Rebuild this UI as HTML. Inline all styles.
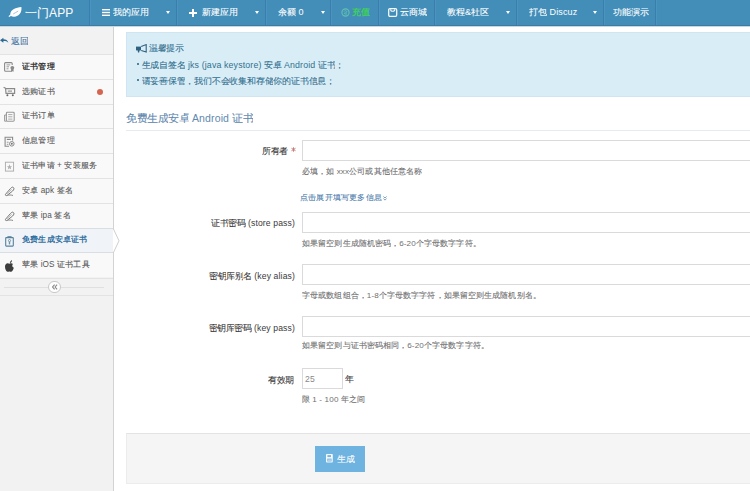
<!DOCTYPE html>
<html><head><meta charset="utf-8">
<style>
*{box-sizing:border-box;margin:0;padding:0}
html,body{width:750px;height:491px;overflow:hidden;background:#fff}
body{position:relative;font-family:"Liberation Sans",sans-serif;color:#393939}
i{font-style:normal;display:inline-block;width:1em;text-align:center;overflow:hidden;vertical-align:top;-webkit-text-stroke:0.1px currentColor}
.b i{-webkit-text-stroke:0}
.L{letter-spacing:0.14px}
.a{position:absolute;white-space:nowrap;line-height:1}
#nav{position:absolute;left:0;top:0;width:750px;height:26px;background:#438eb9}
.dv{position:absolute;top:0;width:1px;height:25px;background:#3b7dab;box-shadow:1px 0 0 #4b93c0}
.nt{position:absolute;top:8px;font-size:9px;line-height:9px;color:#fff;white-space:nowrap}
.car{position:absolute;top:11px;width:0;height:0;border-left:2.8px solid transparent;border-right:2.8px solid transparent;border-top:3.2px solid #fff}
#side{position:absolute;left:0;top:26px;width:114px;height:466px;background:#f2f2f2;border-right:1px solid #d3d3d3}
.row{position:absolute;left:0;width:113px;height:24.8px;background:#f9f9f9;border-top:1px solid #e3e3e3}
.row .t{position:absolute;left:22px;top:6.8px;font-size:8.2px;line-height:9px;color:#555;white-space:nowrap}
.row svg{position:absolute;left:4px;top:7px}
svg{display:block}
.lbl{position:absolute;right:0;font-size:8.6px;line-height:9px;color:#393939;white-space:nowrap;text-align:right}
.inp{position:absolute;left:302px;width:460px;height:21px;border:1px solid #dadada;background:#fff}
.help{position:absolute;left:302px;font-size:8.1px;line-height:9px;color:#6f6f6f;white-space:nowrap}
</style></head>
<body>
<div id="nav">
  <svg class="a" style="left:6px;top:4px" width="20" height="16" viewBox="0 0 20 16">
    <path d="M15.4 3 C10 3.4 4.6 5.5 4.3 10 C4.2 11.6 5.6 12.9 8.2 12.7 C13 12.4 16.1 8.6 15.4 3 Z" fill="#fff"/>
    <path d="M3.3 12.2 L5.6 10.6" stroke="#f4fbff" stroke-width="1.4" stroke-linecap="round"/>
    <path d="M7.2 10 C9 8.9 10.6 8 12.2 7.1" stroke="#9dbdd2" stroke-width="0.9" fill="none"/>
  </svg>
  <div class="a" style="left:25px;top:7px;font-size:12px;color:#fff"><i>一</i><i>门</i><span class="L">APP</span></div>
  <div class="dv" style="left:89px"></div>
  <svg class="a" style="left:102px;top:9px" width="8" height="7" viewBox="0 0 8 7"><rect x="0" y="0" width="8" height="1.4" fill="#fff"/><rect x="0" y="2.8" width="8" height="1.4" fill="#fff"/><rect x="0" y="5.6" width="8" height="1.4" fill="#fff"/></svg>
  <div class="nt" style="left:112.5px"><i>我</i><i>的</i><i>应</i><i>用</i></div>
  <div class="car" style="left:166px"></div>
  <div class="dv" style="left:176px"></div>
  <svg class="a" style="left:189px;top:8.5px" width="8" height="8" viewBox="0 0 8 8"><rect x="3" y="0" width="2" height="8" fill="#fff"/><rect x="0" y="3" width="8" height="2" fill="#fff"/></svg>
  <div class="nt" style="left:202px"><i>新</i><i>建</i><i>应</i><i>用</i></div>
  <div class="car" style="left:255px"></div>
  <div class="dv" style="left:265px"></div>
  <div class="nt" style="left:278px"><i>余</i><i>额</i> <span class="L">0</span></div>
  <div class="car" style="left:321px"></div>
  <div class="dv" style="left:330px"></div>
  <svg class="a" style="left:341px;top:8.3px" width="9" height="9" viewBox="0 0 9 9"><circle cx="4.5" cy="4.5" r="3.6" stroke="#62c0b0" stroke-width="1.1" fill="none"/><path d="M3 3.5 C3.5 2.4 5.5 2.4 5.8 3.6 C6 4.6 4.5 4.8 3.4 5 C3.2 6 5 6.6 6 5.6" stroke="#62c0b0" stroke-width="0.9" fill="none"/></svg>
  <div class="nt b" style="left:352px;color:#3fd05c;font-weight:bold"><i>充</i><i>值</i></div>
  <div class="dv" style="left:378px"></div>
  <svg class="a" style="left:388.3px;top:7.8px" width="9.5" height="9" viewBox="0 0 9.5 9"><rect x="0.7" y="0.7" width="8" height="7.6" rx="1.2" stroke="#f2f8fc" stroke-width="1.3" fill="none"/><path d="M2.6 1.2 C2.6 4 6.8 4 6.8 1.2" stroke="#f2f8fc" stroke-width="1.1" fill="none"/></svg>
  <div class="nt" style="left:400px"><i>云</i><i>商</i><i>城</i></div>
  <div class="dv" style="left:434px"></div>
  <div class="nt" style="left:447px"><i>教</i><i>程</i><span class="L">&amp;</span><i>社</i><i>区</i></div>
  <div class="car" style="left:506px"></div>
  <div class="dv" style="left:516px"></div>
  <div class="nt" style="left:529px"><i>打</i><i>包</i> <span class="L">Discuz</span></div>
  <div class="car" style="left:593px"></div>
  <div class="dv" style="left:603px"></div>
  <div class="nt" style="left:613px"><i>功</i><i>能</i><i>演</i><i>示</i></div>
  <div class="dv" style="left:655px"></div>
</div>

<div id="side">
  <div class="a" style="left:11px;top:10.8px;font-size:8.6px;color:#3b72a3"><i>返</i><i>回</i></div>

  <div class="row" style="top:28px">
    <div class="t b" style="font-weight:bold;color:#393939"><i>证</i><i>书</i><i>管</i><i>理</i></div>
  </div>
  <div class="row" style="top:52.8px">
    <div class="t"><i>选</i><i>购</i><i>证</i><i>书</i></div>
    <div class="a" style="left:96.5px;top:9px;width:6.5px;height:6.5px;border-radius:50%;background:#d6654f"></div>
  </div>
  <div class="row" style="top:77.6px">
    <div class="t"><i>证</i><i>书</i><i>订</i><i>单</i></div>
  </div>
  <div class="row" style="top:102.4px">
    <div class="t"><i>信</i><i>息</i><i>管</i><i>理</i></div>
  </div>
  <div class="row" style="top:127.2px">
    <div class="t"><i>证</i><i>书</i><i>申</i><i>请</i> <span class="L">+</span> <i>安</i><i>装</i><i>服</i><i>务</i></div>
  </div>
  <div class="row" style="top:152px">
    <div class="t"><i>安</i><i>卓</i> <span class="L">apk</span> <i>签</i><i>名</i></div>
  </div>
  <div class="row" style="top:176.8px">
    <div class="t"><i>苹</i><i>果</i> <span class="L">ipa</span> <i>签</i><i>名</i></div>
  </div>
  <div class="row" style="top:201.6px;background:#f0f4f8;border-top-color:#d9dee3">
    <div class="t b" style="font-weight:bold;color:#33709f"><i>免</i><i>费</i><i>生</i><i>成</i><i>安</i><i>卓</i><i>证</i><i>书</i></div>
  </div>
  <div class="row" style="top:226.4px;border-top-color:#d9dee3">
    <div class="t"><i>苹</i><i>果</i> <span class="L">iOS</span> <i>证</i><i>书</i><i>工</i><i>具</i></div>
  </div>
  <div class="row" style="top:252.2px;height:17.8px;background:#f2f2f2;border-bottom:1px solid #e3e3e3">
    <div class="a" style="left:4px;top:7.5px;width:100px;height:1px;background:#e0e0e0"></div>
    <div class="a" style="left:48.4px;top:1.4px;width:12.6px;height:12.6px;border-radius:50%;border:1px solid #c8c8c8;background:#fff"></div><svg class="a" style="left:52px;top:5px" width="6" height="6" viewBox="0 0 6 6"><path d="M2.6 0.6 L0.6 3 L2.6 5.4 M5.1 0.6 L3.1 3 L5.1 5.4" fill="none" stroke="#8a8a8a" stroke-width="1.1"/></svg>
  </div>
</div>
<!-- sidebar icons in page coords -->
<svg class="a" style="left:0;top:34px" width="10" height="10" viewBox="0 34 10 10"><path d="M0 40.3 L3.4 37.8 V39.2 C6 39.2 7.7 40.2 8.4 42.8 C7.3 41.5 5.7 41.1 3.4 41.1 V42.7 Z" fill="#2e6a96"/></svg>
<svg class="a" style="left:2px;top:58px" width="16" height="16" viewBox="0 0 16 16"><rect x="2.6" y="4.6" width="7.6" height="8.6" rx="1" fill="none" stroke="#8a8a8a" stroke-width="1.1"/><path d="M4.5 6.9 H8.3 M4.5 8.8 H7 M4.5 10.8 H6.5" stroke="#9a9a9a" stroke-width="1"/><circle cx="10.3" cy="9.8" r="2.9" fill="#f9f9f9"/><path d="M9.2 11 L8.9 13.7 L10.3 12.9 L11.7 13.7 L11.4 11 Z" fill="#8a8a8a"/><circle cx="10.3" cy="9.8" r="1.9" fill="#8a8a8a"/></svg>
<svg class="a" style="left:2px;top:83px" width="16" height="16" viewBox="0 0 16 16"><path d="M1.6 4.2 L3.6 5.3" stroke="#8a8a8a" stroke-width="1.1" fill="none"/><path d="M3.6 5.7 H12.6 V10.3 H4 Z" stroke="#8a8a8a" stroke-width="1.2" fill="none"/><path d="M5.8 8.1 H10" stroke="#8a8a8a" stroke-width="1.1"/><circle cx="5.4" cy="12.2" r="1" fill="#666"/><circle cx="10.8" cy="12.2" r="1" fill="#666"/></svg>
<svg class="a" style="left:2px;top:108px" width="16" height="16" viewBox="0 0 16 16"><path d="M4.2 7 H2.6 V13.2 H4.6" stroke="#999" stroke-width="1" fill="none"/><rect x="4.4" y="4.3" width="7.8" height="8.9" rx="0.9" stroke="#999" stroke-width="1.1" fill="none"/><path d="M6.2 6.6 H10.4 M6.2 8.8 H10.4 M6.2 11.1 H10.4" stroke="#aaa" stroke-width="1"/></svg>
<svg class="a" style="left:2px;top:133px" width="16" height="16" viewBox="0 0 16 16"><path d="M10.6 7.6 V4.3 H3.1 V13.2 H7" stroke="#8a8a8a" stroke-width="1.1" fill="none"/><path d="M4.8 6.4 H8.8" stroke="#8a8a8a" stroke-width="1.2"/><path d="M4.8 9.2 H6.6 M4.8 11.3 H6.4" stroke="#9a9a9a" stroke-width="1"/><circle cx="9.8" cy="10.8" r="2.3" stroke="#8a8a8a" stroke-width="1" fill="#f9f9f9"/><circle cx="9.8" cy="10.8" r="1" fill="#777"/></svg>
<svg class="a" style="left:2px;top:158px" width="16" height="16" viewBox="0 0 16 16"><rect x="3.4" y="4.2" width="8.2" height="8.9" stroke="#aaa" stroke-width="0.9" fill="none"/><path d="M7.5 6.3 L8.3 8.2 L10.1 8.3 L8.7 9.5 L9.2 11.4 L7.5 10.3 L5.8 11.4 L6.3 9.5 L4.9 8.3 L6.7 8.2 Z" fill="#b0b0b0"/></svg>
<svg class="a" style="left:2px;top:183px" width="16" height="16" viewBox="0 0 16 16"><path d="M11.4 4.5 C12.4 5.4 12 6.6 10.6 8 L5.4 12.2 C4.2 13 3 12.6 3.5 11.3 L8.4 5.6 C9.7 4.1 10.7 3.8 11.4 4.5 Z" stroke="#777" stroke-width="1" fill="none"/><path d="M9.6 6.2 L5.4 10.9" stroke="#aaa" stroke-width="0.8"/><path d="M5.2 12.4 C7.2 11.9 9 11.8 11 12.5" stroke="#888" stroke-width="1" fill="none"/></svg>
<svg class="a" style="left:2px;top:208px" width="16" height="16" viewBox="0 0 16 16"><path d="M11.4 4.5 C12.4 5.4 12 6.6 10.6 8 L5.4 12.2 C4.2 13 3 12.6 3.5 11.3 L8.4 5.6 C9.7 4.1 10.7 3.8 11.4 4.5 Z" stroke="#777" stroke-width="1" fill="none"/><path d="M9.6 6.2 L5.4 10.9" stroke="#aaa" stroke-width="0.8"/><path d="M5.2 12.4 C7.2 11.9 9 11.8 11 12.5" stroke="#888" stroke-width="1" fill="none"/></svg>
<svg class="a" style="left:2px;top:233px" width="16" height="16" viewBox="0 0 16 16"><rect x="3.7" y="4.6" width="7.6" height="8.5" rx="0.6" stroke="#56819b" stroke-width="1.1" fill="none"/><rect x="5.4" y="3.2" width="4.2" height="1.6" fill="#56819b"/><circle cx="7.5" cy="7.6" r="1.1" stroke="#6a90a6" stroke-width="0.9" fill="none"/><rect x="6.8" y="8.8" width="1.4" height="2.6" fill="#6a90a6"/></svg>
<svg class="a" style="left:2px;top:258px" width="16" height="16" viewBox="0 0 16 16"><path d="M7.9 5 C7.9 3.6 8.9 2.5 10 2.2 C10.1 3.5 9.2 4.7 7.9 5 Z" fill="#3d3d3d"/><path d="M7.4 5.7 C8.5 5.1 9.9 5 11 5.9 C9.9 6.8 9.9 8.9 11.8 9.7 C11.3 11.6 10.2 13.8 9 13.8 C8.2 13.8 8 13.4 7.3 13.4 C6.6 13.4 6.3 13.8 5.5 13.8 C4.2 13.6 3 11 3 8.8 C3 6.5 4.3 5.3 5.6 5.3 C6.4 5.3 6.9 5.7 7.4 5.7 Z" fill="#3d3d3d"/></svg>
<!-- arrow for active item -->
<svg class="a" style="left:113px;top:228px" width="8" height="26" viewBox="0 0 8 26"><path d="M0 0 L6 12.8 L0 25.5" fill="#fff" stroke="#cfcfcf" stroke-width="1"/></svg>

<!-- main -->
<div class="a" style="left:126px;top:32px;width:630px;height:64.5px;background:#d9edf7;border:1px solid #cfe6f1"></div>
<svg class="a" style="left:136px;top:43.5px" width="11" height="9" viewBox="0 0 11 9"><path d="M0 2.6 H5 V6.4 H0 Z" fill="#2f6281"/><path d="M1.6 6 H3.6 L3.2 8.6 H2 Z" fill="#2f6281"/><path d="M5.2 2.6 L10.2 0.6 V8 L5.2 6.4" fill="none" stroke="#2f6281" stroke-width="1.1"/></svg>
<div class="a" style="left:148.8px;top:44px;font-size:8.8px;color:#31708f"><i>温</i><i>馨</i><i>提</i><i>示</i></div>
<div class="a" style="left:137px;top:63.3px;width:1.6px;height:1.6px;background:#31708f;border-radius:50%"></div>
<div class="a" style="left:141.5px;top:60.5px;font-size:8.8px;color:#31708f"><i>生</i><i>成</i><i>自</i><i>签</i><i>名</i> <span class="L">jks (java keystore)</span> <i>安</i><i>卓</i> <span class="L">Android</span> <i>证</i><i>书</i><i>；</i></div>
<div class="a" style="left:137px;top:79.3px;width:1.6px;height:1.6px;background:#31708f;border-radius:50%"></div>
<div class="a" style="left:141.5px;top:76.5px;font-size:8.8px;color:#31708f"><i>请</i><i>妥</i><i>善</i><i>保</i><i>管</i><i>，</i><i>我</i><i>们</i><i>不</i><i>会</i><i>收</i><i>集</i><i>和</i><i>存</i><i>储</i><i>你</i><i>的</i><i>证</i><i>书</i><i>信</i><i>息</i><i>；</i></div>

<div class="a" style="left:126px;top:112.8px;font-size:10.5px;color:#5f89b0"><i>免</i><i>费</i><i>生</i><i>成</i><i>安</i><i>卓</i> <span class="L">Android</span> <i>证</i><i>书</i></div>
<div class="a" style="left:126px;top:130px;width:630px;height:1px;background:#e4ebf1"></div>

<!-- form rows -->
<div class="a" style="left:0;top:147px;width:288px;height:10px"><div class="lbl"><i>所</i><i>有</i><i>者</i></div></div>
<svg class="a" style="left:291px;top:146.8px" width="5" height="5" viewBox="0 0 5 5"><path d="M2.5 0.3 V4.7 M0.5 1.3 L4.5 3.7 M0.5 3.7 L4.5 1.3" stroke="#c77f7d" stroke-width="1"/></svg>
<div class="inp" style="top:140px"></div>
<div class="help" style="top:166.5px"><i>必</i><i>填</i><i>，</i><i>如</i> <span class="L">xxx</span><i>公</i><i>司</i><i>或</i><i>其</i><i>他</i><i>任</i><i>意</i><i>名</i><i>称</i></div>

<div class="a" style="left:300px;top:193.5px;font-size:8.2px;color:#4f80ad"><i>点</i><i>击</i><i>展</i><i>开</i><i>填</i><i>写</i><i>更</i><i>多</i><i>信</i><i>息</i></div><svg class="a" style="left:383px;top:195.5px" width="4" height="5" viewBox="0 0 4 5"><path d="M0.4 0.5 L2 2 L3.6 0.5 M0.4 2.6 L2 4.1 L3.6 2.6" fill="none" stroke="#6f93b5" stroke-width="0.9"/></svg>

<div class="a" style="left:0;top:219.1px;width:295px;height:10px"><div class="lbl"><i>证</i><i>书</i><i>密</i><i>码</i> <span class="L">(store pass)</span></div></div>
<div class="inp" style="top:212px"></div>
<div class="help" style="top:238.5px"><i>如</i><i>果</i><i>留</i><i>空</i><i>则</i><i>生</i><i>成</i><i>随</i><i>机</i><i>密</i><i>码</i><i>，</i><span class="L">6-20</span><i>个</i><i>字</i><i>母</i><i>数</i><i>字</i><i>字</i><i>符</i><i>。</i></div>

<div class="a" style="left:0;top:271.6px;width:295px;height:10px"><div class="lbl"><i>密</i><i>钥</i><i>库</i><i>别</i><i>名</i> <span class="L">(key alias)</span></div></div>
<div class="inp" style="top:264px"></div>
<div class="help" style="top:291px"><i>字</i><i>母</i><i>或</i><i>数</i><i>组</i><i>组</i><i>合</i><i>，</i><span class="L">1-8</span><i>个</i><i>字</i><i>母</i><i>数</i><i>字</i><i>字</i><i>符</i><i>，</i><i>如</i><i>果</i><i>留</i><i>空</i><i>则</i><i>生</i><i>成</i><i>随</i><i>机</i><i>别</i><i>名</i><i>。</i></div>

<div class="a" style="left:0;top:323.6px;width:295px;height:10px"><div class="lbl"><i>密</i><i>钥</i><i>库</i><i>密</i><i>码</i> <span class="L">(key pass)</span></div></div>
<div class="inp" style="top:316px"></div>
<div class="help" style="top:341px"><i>如</i><i>果</i><i>留</i><i>空</i><i>则</i><i>与</i><i>证</i><i>书</i><i>密</i><i>码</i><i>相</i><i>同</i><i>，</i><span class="L">6-20</span><i>个</i><i>字</i><i>母</i><i>数</i><i>字</i><i>字</i><i>符</i><i>。</i></div>

<div class="a" style="left:0;top:375.6px;width:294px;height:10px"><div class="lbl"><i>有</i><i>效</i><i>期</i></div></div>
<div class="inp" style="top:368px;width:41px;height:21px"></div>
<div class="a" style="left:305px;top:375px;font-size:8.6px;color:#888"><span class="L">25</span></div>
<div class="a" style="left:345px;top:375px;font-size:8.6px;color:#393939"><i>年</i></div>
<div class="help" style="top:394.5px"><i>限</i> <span class="L">1 - 100</span> <i>年</i><i>之</i><i>间</i></div>

<!-- form actions -->
<div class="a" style="left:126px;top:433px;width:630px;height:51px;background:#f5f5f5;border:1px solid #ececec;border-top-color:#e3e3e3"></div>
<div class="a" style="left:315px;top:445.5px;width:49.5px;height:26px;background:#6fb3e0"></div>
<svg class="a" style="left:325.8px;top:454px" width="7" height="9" viewBox="0 0 7 9"><rect x="0" y="0" width="6.8" height="8.6" rx="0.8" fill="#f4f9fd"/><rect x="1.4" y="1.1" width="3.6" height="2" fill="#7db6dc"/><rect x="1.2" y="4.6" width="4.4" height="2.9" fill="#7db6dc"/><rect x="1.8" y="5.7" width="3.2" height="0.8" fill="#e8f2f9"/></svg>
<div class="a" style="left:337px;top:454.6px;font-size:8.8px;color:#fff"><i>生</i><i>成</i></div>

<div class="a" style="left:113px;top:491px;width:1px;height:0"></div>
<div class="a" style="left:0;top:25px;width:750px;height:1px;background:#3f7aa0"></div>
  <div class="a" style="left:0;top:26px;width:750px;height:1px;background:#c5d9e5"></div>
</body></html>
